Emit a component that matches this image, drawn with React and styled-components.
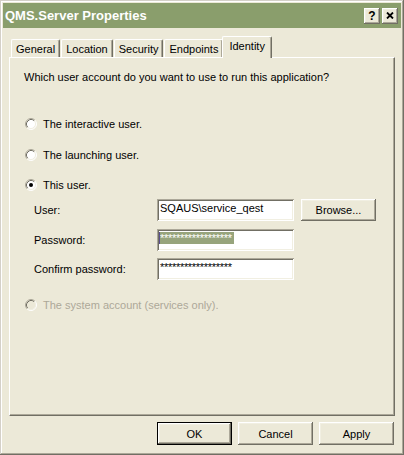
import React from "react";
import styled, { createGlobalStyle } from "styled-components";

const GlobalStyle = createGlobalStyle`
  html, body {
    margin: 0;
    padding: 0;
    background: #ece9d8;
  }
  body {
    font-family: "Liberation Sans", Arial, sans-serif;
    font-size: 11px;
    color: #000;
  }
`;

const bevel = `
  box-shadow: inset -1px -1px #716f64, inset 1px 1px #fff,
    inset -2px -2px #aca899, inset 2px 2px #f1efe2;
`;

const Window = styled.div`
  width: 404px;
  height: 455px;
  box-sizing: border-box;
  padding: 3px;
  background: #ece9d8;
  display: flex;
  flex-direction: column;
  box-shadow: inset -1px -1px #716f64, inset 1px 1px #d4d0c8,
    inset -2px -2px #aca899, inset 2px 2px #fff;
`;

const TitleBar = styled.div`
  height: 25px;
  flex-shrink: 0;
  background: #8a9e6c;
  display: flex;
  align-items: center;
  padding: 0 3px 0 2px;
`;

const Title = styled.span`
  flex: 1;
  color: #fff;
  font-weight: bold;
  font-size: 13px;
`;

const CaptionButton = styled.div`
  width: 16px;
  height: 16px;
  margin-left: 2px;
  box-sizing: border-box;
  background: #ece9d8;
  display: flex;
  align-items: center;
  justify-content: center;
  font-weight: bold;
  font-size: 12px;
  line-height: 1;
  ${bevel}
`;

const Body = styled.div`
  flex: 1;
  display: flex;
  flex-direction: column;
  padding: 8px 6px 7px 6px;
`;

const TabStrip = styled.div`
  height: 21px;
  flex-shrink: 0;
  display: flex;
  align-items: flex-end;
  padding-left: 2px;
`;

const Tab = styled.div`
  position: relative;
  z-index: ${(p) => (p.$active ? 2 : 0)};
  height: ${(p) => (p.$active ? 22 : 18)}px;
  margin: 0 ${(p) => (p.$active ? -1 : 1)}px ${(p) => (p.$active ? -1 : 0)}px
    ${(p) => (p.$active ? -2 : 0)}px;
  padding: 0 ${(p) => (p.$active ? 6 : 4)}px
    ${(p) => (p.$active ? 3 : 0)}px;
  box-sizing: border-box;
  display: flex;
  align-items: center;
  background: #ece9d8;
  border-top: 1px solid #fff;
  border-left: 1px solid #fff;
  border-right: 1px solid #716f64;
  border-radius: 2px 2px 0 0;
  box-shadow: inset -1px 0 #aca899;
`;

const Panel = styled.div`
  flex: 1;
  display: flex;
  flex-direction: column;
  padding: 13px 14px 0 14px;
  border-top: 1px solid #fff;
  border-left: 1px solid #fff;
  border-right: 1px solid #716f64;
  border-bottom: 1px solid #716f64;
  box-shadow: inset -1px -1px #aca899;
`;

const Question = styled.p`
  margin: 0;
  line-height: 13px;
`;

const RadioRow = styled.div`
  display: flex;
  align-items: center;
  gap: 6px;
  height: 16px;
  padding-left: 1px;
  margin-top: ${(p) => p.$gap}px;
  color: ${(p) => (p.$disabled ? "#aca899" : "#000")};
`;

const RadioMark = styled.svg`
  flex-shrink: 0;
  display: block;
`;

const FieldRow = styled.div`
  display: grid;
  grid-template-columns: 116px 137px 75px;
  column-gap: 7px;
  align-items: center;
  height: 22px;
  padding-left: 10px;
  margin-top: ${(p) => p.$gap}px;
`;

const TextBox = styled.div`
  height: 22px;
  box-sizing: border-box;
  background: #fff;
  padding: 3px 2px 0 3px;
  line-height: 13px;
  white-space: nowrap;
  overflow: hidden;
  box-shadow: inset 1px 1px #aca899, inset -1px -1px #fff,
    inset 2px 2px #716f64, inset -2px -2px #f1efe2;
`;

const Masked = styled.span`
  display: inline-block;
  height: 12px;
  line-height: 13px;
  letter-spacing: -0.3px;
  padding-right: 2px;
  color: ${(p) => (p.$selected ? "#fff" : "#000")};
  background: ${(p) => (p.$selected ? "#97a47c" : "transparent")};
  border-left: 1px solid ${(p) => (p.$selected ? "#5b4f8c" : "transparent")};
  margin-left: -1px;
`;

const Button = styled.div`
  width: 75px;
  height: ${(p) => p.$h || 23}px;
  box-sizing: border-box;
  background: #ece9d8;
  display: flex;
  align-items: center;
  justify-content: center;
  ${bevel}
  ${(p) => p.$default && `border: 1px solid #000;`}
`;

const ButtonRow = styled.div`
  display: flex;
  justify-content: flex-end;
  gap: 6px;
  margin-top: 6px;
  padding-right: 1px;
`;

const Radio = ({ checked, disabled }) => (
  <RadioMark width="12" height="12" viewBox="0 0 12 12">
    <circle cx="6" cy="6" r="5" fill={disabled ? "#ece9d8" : "#fff"} />
    <path d="M2.11 9.89A5.5 5.5 0 0 1 9.89 2.11" stroke="#aca899" fill="none" />
    <path d="M9.89 2.11A5.5 5.5 0 0 1 2.11 9.89" stroke="#fff" fill="none" />
    <path d="M2.82 9.18A4.5 4.5 0 0 1 9.18 2.82" stroke="#716f64" fill="none" />
    <path d="M9.18 2.82A4.5 4.5 0 0 1 2.82 9.18" stroke="#f1efe2" fill="none" />
    {checked && <circle cx="6" cy="6" r="2" fill="#000" />}
  </RadioMark>
);

const CloseGlyph = () => (
  <svg width="8" height="7" viewBox="0 0 8 7">
    <path d="M1 0.5L7 6.5M7 0.5L1 6.5" stroke="#000" strokeWidth="1.8" />
  </svg>
);

const tabs = ["General", "Location", "Security", "Endpoints", "Identity"];
const stars = "******************";

export default function App() {
  return (
    <>
      <GlobalStyle />
      <Window>
        <TitleBar>
          <Title>QMS.Server Properties</Title>
          <CaptionButton>?</CaptionButton>
          <CaptionButton>
            <CloseGlyph />
          </CaptionButton>
        </TitleBar>
        <Body>
          <TabStrip>
            {tabs.map((t) => (
              <Tab key={t} $active={t === "Identity"}>
                {t}
              </Tab>
            ))}
          </TabStrip>
          <Panel>
            <Question>
              Which user account do you want to use to run this application?
            </Question>
            <RadioRow $gap={32}>
              <Radio />
              The interactive user.
            </RadioRow>
            <RadioRow $gap={15}>
              <Radio />
              The launching user.
            </RadioRow>
            <RadioRow $gap={14}>
              <Radio checked />
              This user.
            </RadioRow>
            <FieldRow $gap={6}>
              <span>User:</span>
              <TextBox>SQAUS\service_qest</TextBox>
              <Button $h={22}>Browse...</Button>
            </FieldRow>
            <FieldRow $gap={8}>
              <span>Password:</span>
              <TextBox>
                <Masked $selected>{stars}</Masked>
              </TextBox>
            </FieldRow>
            <FieldRow $gap={7}>
              <span>Confirm password:</span>
              <TextBox>
                <Masked>{stars}</Masked>
              </TextBox>
            </FieldRow>
            <RadioRow $gap={17} $disabled>
              <Radio disabled />
              The system account (services only).
            </RadioRow>
          </Panel>
          <ButtonRow>
            <Button $default>OK</Button>
            <Button>Cancel</Button>
            <Button>Apply</Button>
          </ButtonRow>
        </Body>
      </Window>
    </>
  );
}
